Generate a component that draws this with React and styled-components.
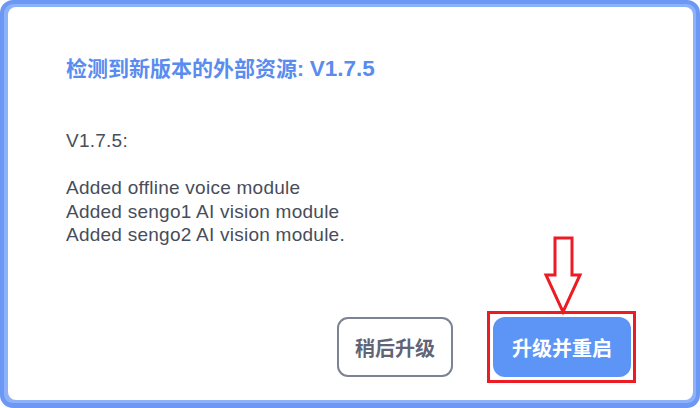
import styled, { createGlobalStyle } from 'styled-components';

const GlobalStyle = createGlobalStyle`
  html, body {
    margin: 0;
    padding: 0;
    background: #ffffff;
  }
  body {
    font-family: "Liberation Sans", "Noto Sans CJK SC", sans-serif;
  }
`;

const Frame = styled.div`
  width: 700px;
  height: 408px;
  box-sizing: border-box;
  border: solid #6b97f5;
  border-width: 4px 4px 5px 4px;
  border-radius: 13px;
  background: #8db1f8;
  display: flex;
`;

const Dialog = styled.div`
  flex: 1;
  display: flex;
  flex-direction: column;
  margin: 3px 3px 3px 4px;
  border-radius: 8px;
  background: #ffffff;
  padding: 47px 57px 17px 58px;
`;

const Title = styled.h1`
  margin: 0;
  font-family: "Liberation Sans", "Noto Sans CJK SC", sans-serif;
  font-size: 21px;
  line-height: 30px;
  font-weight: 700;
  color: #5a8cf0;
  white-space: nowrap;
`;

const Version = styled.span`
  font-size: 22.5px;
`;

const Notes = styled.div`
  margin-top: 45px;
  font-family: "Liberation Sans", "Noto Sans CJK SC", sans-serif;
  font-size: 19px;
  line-height: 23.5px;
  letter-spacing: 0.25px;
  color: #474d5b;
  white-space: pre-line;
`;

const Actions = styled.div`
  margin-top: auto;
  display: flex;
  justify-content: flex-end;
  align-items: center;
  gap: 34px;
`;

const Button = styled.button`
  box-sizing: border-box;
  height: 60px;
  padding: 0;
  border-radius: ${ ( { primary } ) => ( primary ? '12px' : '11px' ) };
  border: ${ ( { primary } ) => ( primary ? 'none' : '2px solid #7d8395' ) };
  background: ${ ( { primary } ) => ( primary ? '#5d95f7' : '#ffffff' ) };
  color: ${ ( { primary } ) => ( primary ? '#ffffff' : '#5f6577' ) };
  width: ${ ( { primary } ) => ( primary ? '138px' : '116px' ) };
  font-family: "Noto Sans CJK SC", sans-serif;
  font-size: 20px;
  font-weight: 700;
  cursor: pointer;
`;

const Highlight = styled.div`
  position: relative;
  border: 3px solid #ec1c24;
  padding: 3px 2px 3px 3px;
  display: flex;
`;

const Arrow = styled.svg`
  position: absolute;
  bottom: 100%;
  left: 54px;
  overflow: visible;
`;

function DownArrow() {
  return (
    <Arrow width="38" height="78" viewBox="0 0 38 78">
      <polygon
        points="11,2 28,2 28,39 36,39 19,76 2,39 11,39"
        fill="#ffffff"
        stroke="#ec1c24"
        strokeWidth="3"
        strokeLinejoin="miter"
      />
    </Arrow>
  );
}

export default function App() {
  const version = 'V1.7.5';
  const changes = [
    'Added offline voice module',
    'Added sengo1 AI vision module',
    'Added sengo2 AI vision module.'
  ];

  return (
    <>
      <GlobalStyle />
      <Frame>
        <Dialog>
          <Title>
            检测到新版本的外部资源: <Version>{ version }</Version>
          </Title>
          <Notes>{ `${ version }:\n\n${ changes.join( '\n' ) }` }</Notes>
          <Actions>
            <Button>稍后升级</Button>
            <Highlight>
              <DownArrow />
              <Button primary>升级并重启</Button>
            </Highlight>
          </Actions>
        </Dialog>
      </Frame>
    </>
  );
}
